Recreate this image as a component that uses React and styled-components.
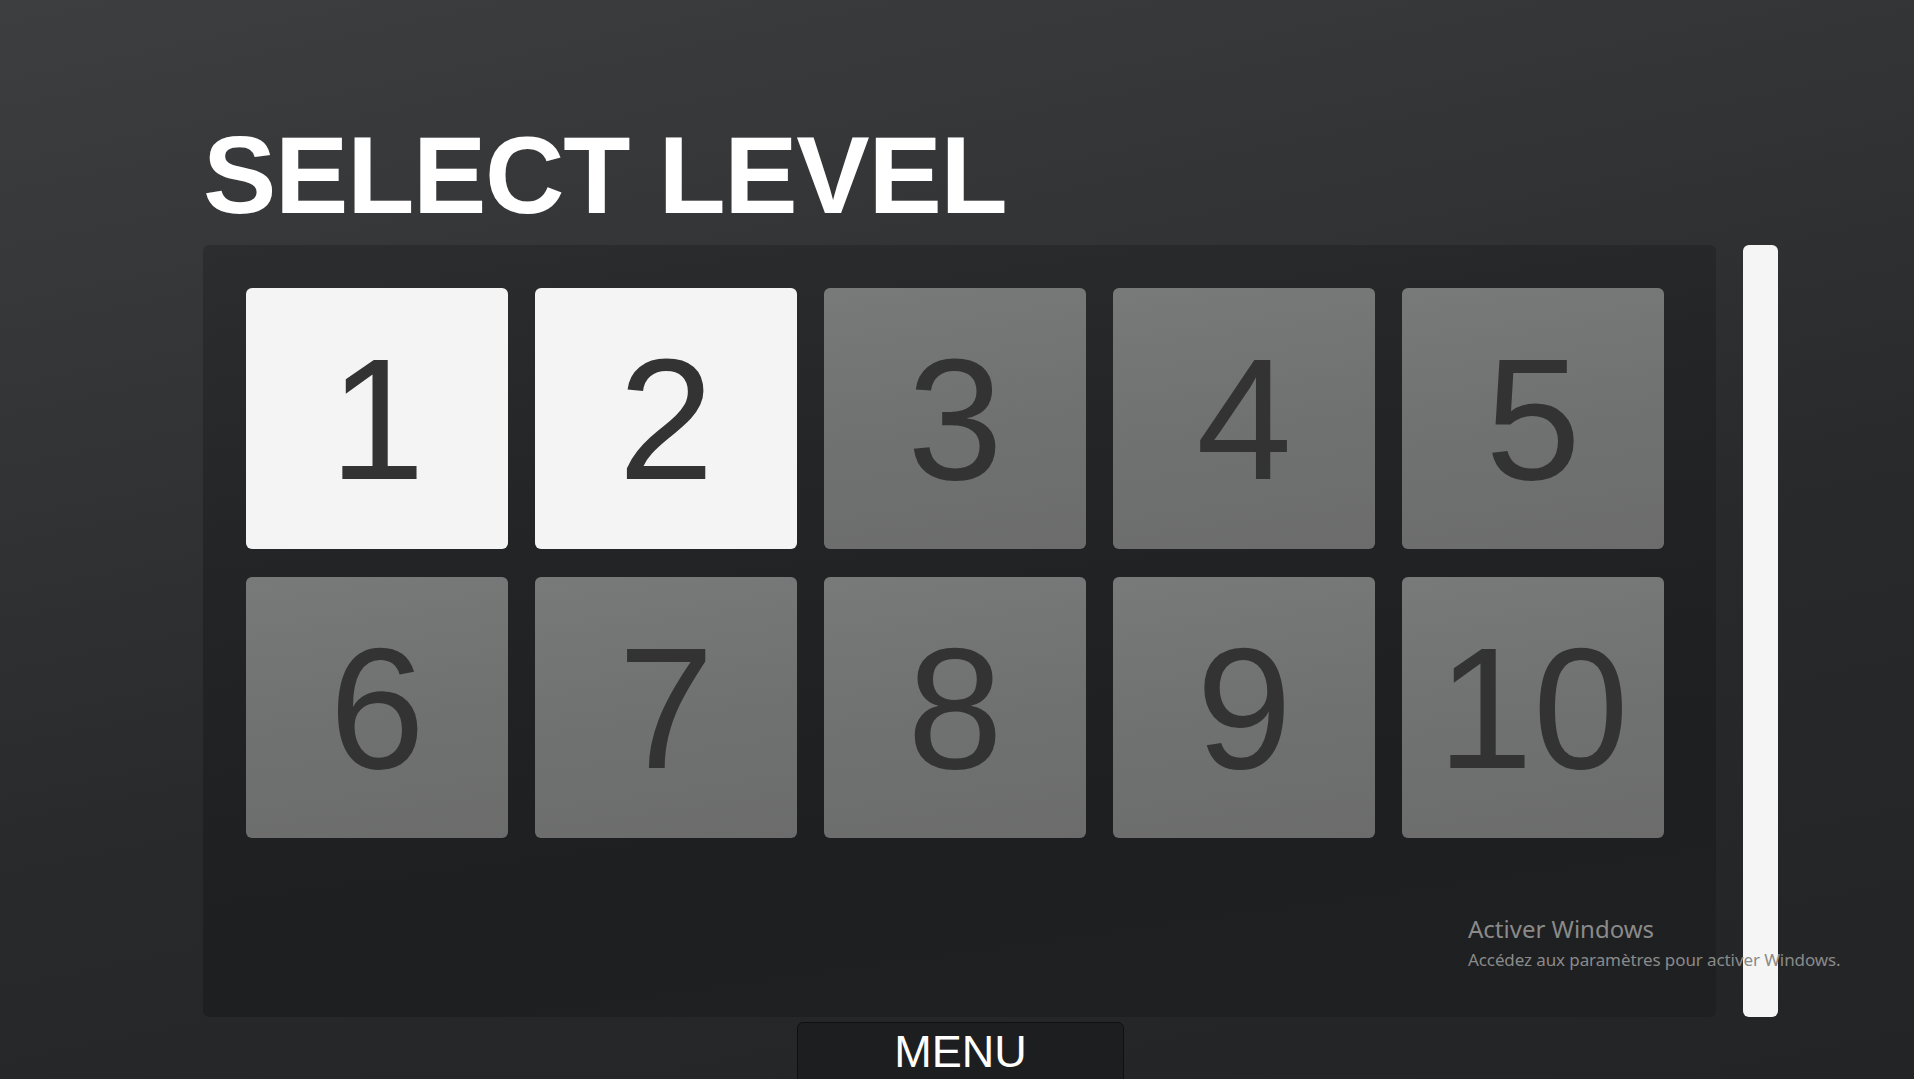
import styled, { createGlobalStyle } from "styled-components";

const GlobalStyle = createGlobalStyle`
  html, body {
    margin: 0;
    padding: 0;
    height: 100%;
    overflow: hidden;
  }
  body {
    font-family: "Liberation Sans", Arial, sans-serif;
    background: #2c2d2f;
  }
`;

const levels = [
  { n: 1, unlocked: true },
  { n: 2, unlocked: true },
  { n: 3 },
  { n: 4 },
  { n: 5 },
  { n: 6 },
  { n: 7 },
  { n: 8 },
  { n: 9 },
  { n: 10 },
];

const Screen = styled.div`
  position: relative;
  width: 100vw;
  height: 100vh;
  box-sizing: border-box;
  padding: 120px 0 0 203px;
  display: flex;
  flex-direction: column;
  background: linear-gradient(168deg, #3d3e40 0%, #333436 30%, #28292b 60%, #232426 100%);
  overflow: hidden;
`;

const Title = styled.h1`
  flex-shrink: 0;
  margin: 0 0 15px 0;
  font-family: "Liberation Sans", Arial, sans-serif;
  font-weight: 700;
  font-size: 110px;
  line-height: 110px;
  color: #ffffff;
  letter-spacing: -1.3px;
`;

const Body = styled.div`
  flex-shrink: 0;
  display: flex;
  gap: 27px;
  height: 772px;
`;

const Panel = styled.div`
  width: 1513px;
  box-sizing: border-box;
  padding: 43px 0 0 43px;
  border-radius: 6px;
  background: linear-gradient(172deg, #2c2d2f 0%, #232426 35%, #1e1f21 70%, #1f2022 100%);
`;

const Grid = styled.div`
  display: grid;
  grid-template-columns: repeat(5, 262px);
  grid-auto-rows: 261px;
  gap: 28px 27px;
`;

const Tile = styled.button`
  display: flex;
  align-items: center;
  justify-content: center;
  border: none;
  padding: 0;
  margin: 0;
  border-radius: 6px;
  font-family: "Liberation Sans", Arial, sans-serif;
  font-size: 172px;
  line-height: 1;
  color: #333333;
  cursor: pointer;
  background: ${(p) =>
    p.$unlocked
      ? "#f4f4f4"
      : "linear-gradient(172deg, #787979 0%, #707171 50%, #6c6c6c 100%)"};
`;

const Scrollbar = styled.div`
  width: 35px;
  border-radius: 6px;
  background: #f5f5f5;
`;

const MenuButton = styled.button`
  flex-shrink: 0;
  align-self: flex-start;
  margin: 5px 0 0 594px;
  width: 327px;
  height: 70px;
  box-sizing: border-box;
  padding: 6px 0 0 0;
  display: flex;
  justify-content: center;
  align-items: flex-start;
  border: 1px solid #0f1011;
  border-radius: 6px;
  background: #1d1e20;
  color: #ffffff;
  font-family: "Liberation Sans", Arial, sans-serif;
  font-size: 45px;
  line-height: 45px;
  cursor: pointer;
`;

const Watermark = styled.div`
  position: absolute;
  left: 1468px;
  top: 913px;
  font-family: "Noto Sans", "Open Sans", sans-serif;
  color: #8a8a8a;
  pointer-events: none;
`;

const WatermarkTitle = styled.div`
  font-size: 24px;
  line-height: 32px;
  letter-spacing: 0;
`;

const WatermarkText = styled.div`
  margin-top: 4px;
  font-size: 17px;
  line-height: 22px;
  letter-spacing: -0.1px;
`;

export default function App() {
  return (
    <>
      <GlobalStyle />
      <Screen>
        <Title>SELECT LEVEL</Title>
        <Body>
          <Panel>
            <Grid>
              {levels.map((l) => (
                <Tile key={l.n} $unlocked={l.unlocked}>
                  {l.n}
                </Tile>
              ))}
            </Grid>
          </Panel>
          <Scrollbar />
        </Body>
        <MenuButton>MENU</MenuButton>
        <Watermark>
          <WatermarkTitle>Activer Windows</WatermarkTitle>
          <WatermarkText>Accédez aux paramètres pour activer Windows.</WatermarkText>
        </Watermark>
      </Screen>
    </>
  );
}
